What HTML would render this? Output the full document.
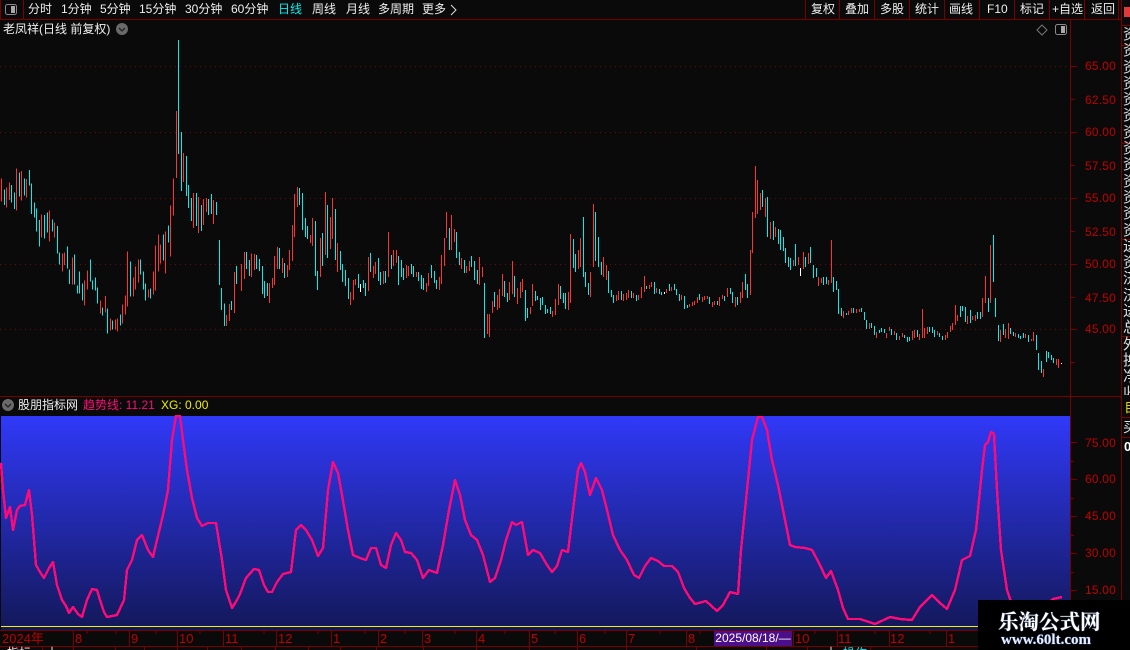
<!DOCTYPE html>
<html><head><meta charset="utf-8">
<style>
html,body{margin:0;padding:0;background:#0a0a0a}
#p{position:relative;width:1130px;height:650px;overflow:hidden;background:#0a0a0a;font-family:"Liberation Sans","WenQuanYi Zen Hei","Noto Sans CJK SC",sans-serif;font-size:12px;color:#eee}
#p span{position:absolute;white-space:nowrap;line-height:14px}
.a{color:#c00000;letter-spacing:.2px}
.t{color:#c00000;font-size:13px}
.h{position:absolute;background:#7a0000;height:1px}
.v{position:absolute;background:#7a0000;width:1px}
#s{position:absolute;left:0;top:0}
</style></head><body><div id="p">
<svg id="s" width="1130" height="650" viewBox="0 0 1130 650">
<defs><linearGradient id="g" x1="0" y1="0" x2="0" y2="1"><stop offset="0" stop-color="#3039f8"/><stop offset="1" stop-color="#131859"/></linearGradient></defs>
<rect x="1" y="416" width="1069" height="214" fill="url(#g)"/>
<g stroke="#6e0a0a" stroke-width="1" stroke-dasharray="1 4" shape-rendering="crispEdges">
<path d="M0 66.5H1068M0 132.5H1068M0 198.5H1068M0 264.5H1068M0 329.5H1068"/>
</g>
<g fill="none" stroke-width="3" shape-rendering="crispEdges" transform="translate(.17,160) scale(.33333)">
<path stroke="#ff3232" d="M4 55V125M19 82V143M28 67V120M49 25V152M64 33V122M79 57V113M124 163V233M148 151V245M163 187V233M187 280V335M193 277V315M217 292V374M253 361V437M262 331V389M301 421V461M316 408V458M331 475V512M346 478V509M352 475V515M367 433V491M376 406V464M382 274V440M400 352V410M406 319V389M415 298V368M445 388V413M460 334V404M466 256V392M475 223V335M481 253V311M496 214V341M511 136V290M520 55V167M529 -147V54M550 -21V66M580 99V204M595 111V219M610 117V195M619 114V156M640 120V192M679 465V498M688 432V483M703 336V459"/>
<path stroke="#00f0f0" d="M13 88V135M34 75V128M43 97V147M58 37V110M73 55V107M88 30V77M94 70V162M103 127V173M109 145V215M118 180V260M133 165V236M142 157V218M157 178V215M172 198V281M178 277V314M202 259V326M208 328V372M223 283V374M232 376V401M238 334V401M247 370V422M271 298V365M277 361V389M286 352V392M292 382V431M307 442V467M322 445V521M337 481V509M361 463V497M391 304V410M421 298V344M430 334V389M436 370V422M451 385V416M490 223V302M505 196V248M535 -360V-18M544 -84V93M559 -12V108M565 75V144M574 114V183M589 99V198M604 135V213M625 117V165M634 102V162M649 126V165M658 240V375M664 384V450M673 430V498M694 423V450M709 318V372"/>
</g>
<g fill="none" stroke-width="3" shape-rendering="crispEdges" transform="translate(240.17,180) scale(.33333)">
<path stroke="#ff3232" d="M4 252V333M13 216V297M34 220V291M43 222V270M88 309V369M97 294V324M103 228V315M112 201V267M127 234V279M142 255V291M148 210V270M157 135V243M163 42V171M172 21V81M211 165V189M217 114V198M241 174V291M256 36V225M271 111V207M277 54V177M292 189V276M331 336V375M340 300V360M346 297V315M385 231V333M400 258V294M406 246V282M430 273V312M445 156V291M460 210V258M469 210V249M499 255V294M505 258V288M529 276V291M559 309V336M565 279V318M598 291V330M604 225V312M613 174V258M619 96V174M634 105V210M643 147V186M664 234V267M679 258V279M688 243V273M718 231V315"/>
<path stroke="#00f0f0" d="M19 216V267M28 240V288M49 225V267M58 237V273M67 258V342M73 303V354M82 309V348M118 204V267M133 249V294M178 24V75M187 39V150M196 114V171M202 138V177M226 123V288M232 273V330M247 159V258M262 75V234M286 87V240M301 213V270M307 252V306M316 270V318M325 294V357M355 282V324M370 300V324M376 309V348M391 219V276M415 234V303M421 276V315M436 273V309M454 225V267M475 228V315M484 240V291M490 264V300M514 252V282M520 258V291M535 276V303M544 285V327M550 294V330M574 255V294M583 273V309M589 300V327M628 144V210M649 156V234M658 216V255M673 240V279M694 228V261M703 243V300M712 270V312"/>
<path stroke="#fff" d="M361 312V336"/>
</g>
<g fill="none" stroke-width="3" shape-rendering="crispEdges" transform="translate(480.17,190) scale(.33333)">
<path stroke="#ff3232" d="M7 231V261M22 372V432M28 372V441M37 333V369M52 315V360M58 297V354M67 252V318M88 276V330M97 213V312M112 294V342M121 276V324M127 267V306M151 351V372M157 282V348M217 363V381M226 327V375M235 282V345M265 306V360M271 132V339M295 180V237M301 144V231M331 246V321M340 42V231M370 201V261M379 225V270M409 315V333M415 303V330M430 312V333M439 309V330M445 300V324M460 309V324M475 315V330M484 291V324M493 258V306M508 285V297M514 276V291M529 294V309M559 297V309M574 291V303M604 315V330M628 342V351M637 336V348M643 333V345M652 321V339M667 321V336M673 318V330M682 318V327M697 336V351M703 333V345M718 321V348M727 315V327M742 294V321M766 321V351M781 306V339M787 276V324"/>
<path stroke="#00f0f0" d="M13 279V444M43 306V351M73 273V321M82 309V336M103 258V321M136 300V393M142 354V384M166 303V333M172 318V330M181 324V360M187 321V345M196 345V372M202 357V369M211 351V372M241 288V327M250 309V339M256 309V357M280 147V234M286 192V246M310 81V261M316 246V291M325 279V315M346 66V213M355 141V231M364 216V255M385 243V309M394 300V321M400 315V339M424 303V330M454 303V324M469 315V333M499 288V297M523 276V312M538 297V312M544 306V315M568 282V303M583 282V300M589 297V315M598 312V333M613 318V357M622 345V354M658 312V330M688 321V342M712 333V345M733 318V333M751 294V312M757 306V339M772 321V345M796 252V300M802 282V324"/>
<path stroke="#fff" d="M553 306V312"/>
</g>
<g fill="none" stroke-width="3" shape-rendering="crispEdges" transform="translate(740.17,160) scale(.33333)">
<path stroke="#ff3232" d="M31 270V405M37 156V279M46 18V174M52 60V162M61 99V150M76 114V171M91 186V237M106 201V231M160 300V318M175 291V315M190 276V327M205 279V312M235 351V378M244 354V369M265 360V375M274 240V369M310 453V474M325 453V465M334 444V459M349 447V459M358 447V456M388 489V507M409 516V534M439 519V534M448 501V513M463 513V525M478 528V540M487 519V531M517 513V540M523 510V534M538 522V540M547 447V534M553 504V534M562 501V522M592 513V525M616 525V540M622 516V534M631 498V516M637 489V510M646 435V495M652 465V483M682 468V492M697 468V480M706 465V483M727 414V471M736 348V429M751 255V429M781 510V546M796 507V534M805 489V537M826 519V531M856 522V534M874 537V543M880 516V543M910 627V651M949 597V615M955 597V624"/>
<path stroke="#00f0f0" d="M67 90V141M82 111V231M100 183V240M115 207V252M121 210V270M130 231V273M136 264V309M145 291V321M151 294V330M166 252V318M196 291V321M211 261V309M220 315V354M229 324V351M250 351V375M259 351V372M280 351V396M289 363V390M295 387V462M304 444V468M319 459V465M340 444V459M364 444V456M373 456V480M379 480V507M394 489V504M403 498V525M418 510V519M424 504V516M433 507V519M454 507V525M469 519V540M493 525V534M502 531V546M508 531V543M532 510V531M568 501V516M577 501V519M583 510V531M598 519V531M607 528V540M661 438V471M667 438V453M676 441V486M691 450V489M712 456V477M721 456V477M745 414V456M760 225V366M766 414V471M775 495V543M790 492V525M811 504V522M820 516V528M835 522V534M841 528V537M850 519V534M865 525V546M889 525V570M895 579V630M904 603V639M919 573V606M925 576V594M934 585V600M940 594V609"/>
<path stroke="#fff" d="M181 324V348M964 609V612"/>
</g>
<path fill="none" stroke="#ff0a78" stroke-width="2.4" stroke-linejoin="round" shape-rendering="crispEdges" d="M1 463L3 490 6 518 10 507 13 530 17 510 20 506 25 505 29 490 32 515 36 565 40 572 44 578 49 568 53 562 57 585 62 600 66 606 69 613 73 607 78 614 82 617 87 600 92 589 97 590 100 600 104 612 107 617 117 615 124 600 127 570 132 560 137 540 142 535 148 550 153 557 157 540 163 515 168 490 172 440 176 416 180 416 183 440 187 470 192 498 197 518 202 526 208 523 216 523 222 560 226 590 232 608 237 600 240 594 246 578 254 569 259 570 264 585 268 592 272 592 277 582 283 574 291 572 296 530 301 525 306 530 312 540 318 556 323 548 328 490 333 462 338 473 342 495 348 530 353 555 360 558 366 560 371 548 376 548 381 565 386 568 391 545 396 533 401 540 405 552 411 553 417 560 423 578 429 570 437 573 443 545 449 510 455 480 460 495 465 520 471 535 477 540 483 555 490 582 495 578 501 560 506 540 512 522 516 525 522 522 528 555 533 550 540 553 547 565 552 572 557 566 562 550 568 552 573 510 578 470 581 463 585 472 590 495 596 478 602 490 607 510 613 535 620 550 627 560 634 575 639 578 645 566 651 558 658 561 664 566 672 566 678 572 684 588 690 598 695 604 706 601 717 611 723 605 730 592 738 594 741 550 746 500 752 440 758 417 762 417 767 430 772 460 778 485 785 520 790 545 795 547 805 548 812 550 820 565 826 578 831 571 838 590 843 608 848 619 860 619 875 624 890 617 900 619 912 620 920 607 932 595 940 603 947 609 955 590 962 560 970 556 976 530 982 470 985 445 988 442 991 432 994 434 997 490 1001 550 1007 590 1012 605 1020 618 1040 610 1053 599 1062 597"/>
<rect x="1" y="626" width="1069" height="1" fill="#f4f000"/>
<g stroke="#7a0000" stroke-width="1" shape-rendering="crispEdges" fill="none">
<path d="M1071 66.5h6M1071 99.5h4M1071 132.5h6M1071 165.5h4M1071 198.5h6M1071 231.5h4M1071 264.5h6M1071 297.5h4M1071 329.5h6M1071 362.5h4M1071 442.5h6M1071 461.5h3M1071 479.5h6M1071 498.5h3M1071 516.5h6M1071 535.5h3M1071 553.5h6M1071 572.5h3M1071 590.5h6"/>
<path d="M87 631v3M116 631v3M156 631v3M200 631v3M264 631v3M318 631v3M365 631v3M405 631v3M455 631v3M505 631v3M555 631v3M605 631v3M660 631v3M700 631v3M815 631v3M875 631v3M930 631v3"/>
<path d="M73.5 631v15M129.5 631v15M177.5 631v15M223.5 631v15M276.5 631v15M331.5 631v15M378.5 631v15M422.5 631v15M476.5 631v15M529.5 631v15M577.5 631v15M626.5 631v15M686.5 631v15M793.5 631v15M837.5 631v15M889.5 631v15M946.5 631v15"/>
<path d="M42.5 647v3M73.5 647v3M115.5 647v3M144.5 647v3M177.5 647v3M207.5 647v3M241.5 647v3M275.5 647v3M308.5 647v3M340.5 647v3M376.5 647v3M423.5 647v3M476.5 647v3M529.5 647v3M577.5 647v3M626.5 647v3M696.5 647v3M766.5 647v3M807.5 647v3M870.5 647v3"/>
</g>
<!-- toolbar icons -->
<rect x="5.5" y="4.5" width="11" height="10" rx="2" fill="none" stroke="#8a8a8a"/><rect x="11" y="6" width="4" height="7" fill="#a8a8a8"/>
<rect x="1055.5" y="24.5" width="11" height="10" rx="2" fill="none" stroke="#8a8a8a"/><rect x="1061" y="26" width="4" height="7" fill="#a8a8a8"/>
<path d="M1042 25l5 5-5 5-5-5z" fill="none" stroke="#777"/>
<circle cx="122" cy="29" r="6" fill="#6a6a6a"/><path d="M119 28l3 3 3-3" fill="none" stroke="#222" stroke-width="1.3"/>
<circle cx="8" cy="405" r="6" fill="#6a6a6a"/><path d="M5 404l3 3 3-3" fill="none" stroke="#222" stroke-width="1.3"/>
<path d="M451 5l5 5-5 5" fill="none" stroke="#ddd"/>
<rect x="1124" y="7" width="6" height="10" fill="#e03a3a"/>
</svg>
<div class="h" style="left:0;top:19px;width:1122px"></div>
<div class="v" style="left:0;top:0;height:20px"></div><div class="v" style="left:23px;top:0;height:20px"></div>
<div class="v" style="left:805px;top:0;height:19px"></div><div class="v" style="left:839px;top:0;height:19px"></div><div class="v" style="left:874px;top:0;height:19px"></div><div class="v" style="left:909px;top:0;height:19px"></div><div class="v" style="left:944px;top:0;height:19px"></div><div class="v" style="left:979px;top:0;height:19px"></div><div class="v" style="left:1014px;top:0;height:19px"></div><div class="v" style="left:1049px;top:0;height:19px"></div><div class="v" style="left:1084px;top:0;height:19px"></div><div class="v" style="left:1118px;top:0;height:19px"></div>
<div class="v" style="left:1070px;top:19px;height:612px"></div>
<div class="v" style="left:1121px;top:0;height:631px"></div>
<div class="h" style="left:0;top:396px;width:1122px;height:1px"></div>
<div class="h" style="left:0;top:630px;width:1130px;height:1px"></div>
<div class="h" style="left:0;top:646px;width:1130px;height:1px"></div>
<div class="h" style="left:1121px;top:25px;width:9px"></div><div class="h" style="left:1121px;top:45px;width:9px"></div><div class="h" style="left:1121px;top:143px;width:9px"></div><div class="h" style="left:1121px;top:239px;width:9px"></div><div class="h" style="left:1121px;top:336px;width:9px"></div><div class="h" style="left:1121px;top:417px;width:9px"></div><div class="h" style="left:1121px;top:437px;width:9px"></div>
<span style="left:28px;top:2px">分时</span><span style="left:61px;top:2px">1分钟</span><span style="left:100px;top:2px">5分钟</span><span style="left:139px;top:2px">15分钟</span><span style="left:185px;top:2px">30分钟</span><span style="left:231px;top:2px">60分钟</span><span style="left:278px;top:2px;color:#00f0f0">日线</span><span style="left:312px;top:2px">周线</span><span style="left:346px;top:2px">月线</span><span style="left:378px;top:2px">多周期</span><span style="left:422px;top:2px">更多</span>
<span style="left:811px;top:2px">复权</span><span style="left:845px;top:2px">叠加</span><span style="left:880px;top:2px">多股</span><span style="left:915px;top:2px">统计</span><span style="left:949px;top:2px">画线</span><span style="left:987px;top:2px">F10</span><span style="left:1020px;top:2px">标记</span><span style="left:1052px;top:2px">+自选</span><span style="left:1091px;top:2px">返回</span>
<span style="left:3px;top:22px">老凤祥(日线 前复权)</span>
<span style="left:18px;top:398px">股朋指标网</span><span style="left:83px;top:398px;color:#ff0a78">趋势线: 11.21</span><span style="left:161px;top:398px;color:#f0f000">XG: 0.00</span>
<span class="a" style="left:1085px;top:59px">65.00</span><span class="a" style="left:1085px;top:93px">62.50</span><span class="a" style="left:1085px;top:125px">60.00</span><span class="a" style="left:1085px;top:159px">57.50</span><span class="a" style="left:1085px;top:191px">55.00</span><span class="a" style="left:1085px;top:225px">52.50</span><span class="a" style="left:1085px;top:257px">50.00</span><span class="a" style="left:1085px;top:291px">47.50</span><span class="a" style="left:1085px;top:322px">45.00</span>
<span class="a" style="left:1085px;top:436px">75.00</span><span class="a" style="left:1085px;top:472px">60.00</span><span class="a" style="left:1085px;top:509px">45.00</span><span class="a" style="left:1085px;top:546px">30.00</span><span class="a" style="left:1085px;top:583px">15.00</span>
<div style="position:absolute;left:1123px;top:27px;width:7px;height:368px;overflow:hidden;font-size:15px;line-height:16.3px;color:#ddd;white-space:nowrap">
<div>资</div><div>资</div><div>资</div><div>资</div><div>资</div><div>资</div><div>资</div><div>资</div><div>资</div><div>资</div><div>资</div><div>资</div><div>资</div><div>进</div><div>资</div><div>济</div><div>济</div><div>进</div><div>总</div><div>外</div><div>换</div><div>净</div><div>收</div>
</div>
<div style="position:absolute;left:1124px;top:399px;width:6px;overflow:hidden;font-size:14px;line-height:17px;color:#d8d800">自</div>
<div style="position:absolute;left:1123px;top:419px;width:7px;overflow:hidden;font-size:14px;line-height:17px;color:#ddd">买</div>
<span style="left:1124px;top:440px;font-weight:bold;color:#fff;font-size:13px">0</span>
<span class="t" style="left:2px;top:632px">2024年</span><span class="t" style="left:75px;top:632px">8</span><span class="t" style="left:131px;top:632px">9</span><span class="t" style="left:179px;top:632px">10</span><span class="t" style="left:225px;top:632px">11</span><span class="t" style="left:278px;top:632px">12</span><span class="t" style="left:333px;top:632px">1</span><span class="t" style="left:380px;top:632px">2</span><span class="t" style="left:424px;top:632px">3</span><span class="t" style="left:478px;top:632px">4</span><span class="t" style="left:531px;top:632px">5</span><span class="t" style="left:579px;top:632px">6</span><span class="t" style="left:628px;top:632px">7</span><span class="t" style="left:688px;top:632px">8</span>
<span style="left:714px;top:631px;width:78px;height:15px;background:#4b0f8a;color:#fff;font-size:12px;line-height:15px;text-align:center">2025/08/18/—</span>
<span class="t" style="left:795px;top:632px">10</span><span class="t" style="left:838px;top:632px">11</span><span class="t" style="left:890px;top:632px">12</span><span class="t" style="left:948px;top:632px">1</span>
<span style="left:7px;top:646px">指标</span><span style="left:46px;top:646px">十</span><span style="left:825px;top:646px">十</span><span style="left:843px;top:646px;color:#00f0f0">操作</span>
<div style="position:absolute;left:978px;top:600px;width:152px;height:50px;background:#000"></div>
<span style="left:998px;top:608px;color:#fff;font:bold 20.5px/24px 'Noto Serif CJK SC','Liberation Serif',serif;text-shadow:0 0 1px #9db8ff">乐淘公式网</span>
<span style="left:1001px;top:632px;color:#e8f0ff;font:bold 15px/16px 'Liberation Serif',serif;text-shadow:0 0 1px #6f93ff">www.60lt.com</span>
</div></body></html>
